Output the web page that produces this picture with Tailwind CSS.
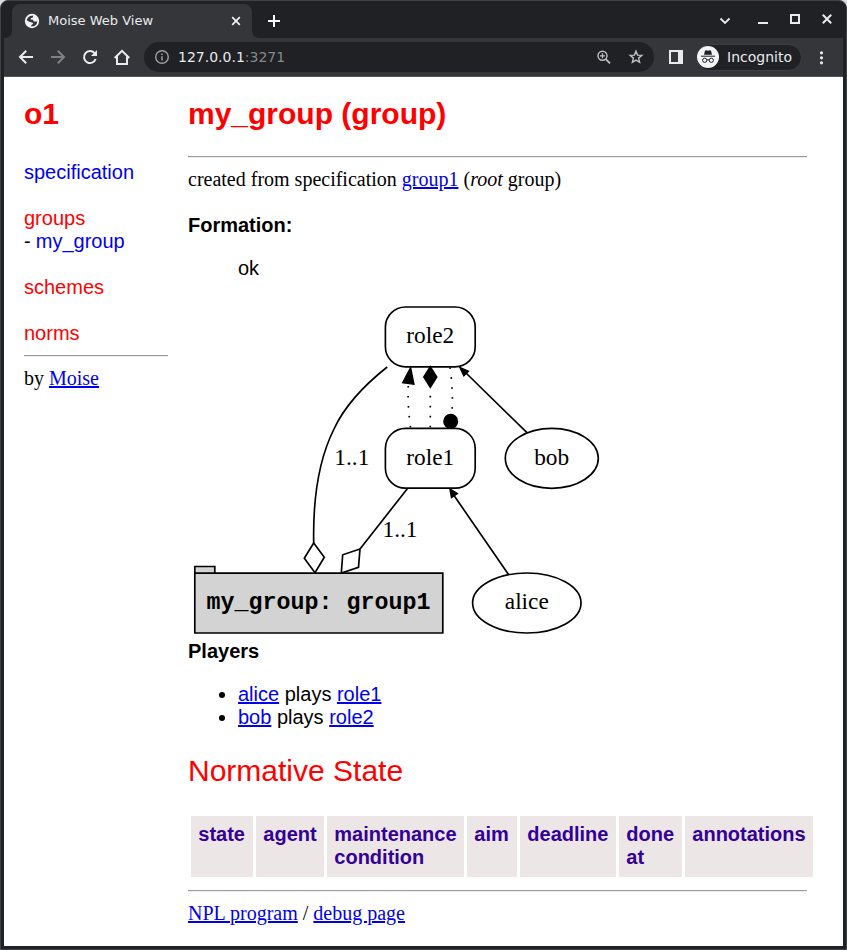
<!DOCTYPE html>
<html lang="en">
<head>
<meta charset="utf-8">
<title>Moise Web View</title>
<script src="https://cdn.jsdelivr.net/npm/@tailwindcss/browser@4"></script>
</head>
<body class="w-[847px] h-[950px] overflow-hidden bg-[#dcdcdc]">
<div class="w-[847px] h-[950px] flex flex-col bg-[#202124] border border-[#3f4245] rounded-t-[8px] overflow-hidden font-['DejaVu_Sans',sans-serif]">
  <!-- Tab strip -->
  <header class="h-[37px] shrink-0 flex items-end text-[#e8eaed]">
    <svg class="w-[11px] h-2 shrink-0" viewBox="0 0 11 8"><path d="M3 8Q11 8 11 0V8Z" fill="#35363a"/></svg>
    <div class="w-[240px] h-[34px] shrink-0 bg-[#35363a] rounded-t-[8px] flex items-center pl-3 pr-[10px]">
      <svg class="w-4 h-4 mr-2" viewBox="0 0 16 16"><circle cx="8" cy="8" r="7.2" fill="#f1f3f4"/><path d="M9.3 2.5 8.8 4.4 6.8 5.2 6.6 6.6 9 6.8 9.8 8.4 13.3 8.6Q13.2 12 10.6 13L7.4 13.4 7.2 12.2 9.2 10.8 8.4 9.4 5.8 9 2.7 7.2Q3.2 4 6 2.9Z" fill="#35363a"/></svg>
      <span class="text-[13px] leading-4 grow whitespace-nowrap">Moise Web View</span>
      <svg class="w-3 h-3" viewBox="0 0 12 12"><path d="M2.2 2.2 9.8 9.8M9.8 2.2 2.2 9.8" stroke="#f1f3f4" stroke-width="1.7"/></svg>
    </div>
    <svg class="w-2 h-2 shrink-0" viewBox="0 0 8 8"><path d="M0 0Q0 8 8 8H0Z" fill="#35363a"/></svg>
    <svg class="w-[30px] h-[34px]" viewBox="0 0 30 34"><path d="M8 17H20M14 11V23" stroke="#fff" stroke-width="2"/></svg>
    <svg class="w-[140px] h-[37px] ml-auto" viewBox="706 1 140 37" fill="none" stroke="#e8eaed" stroke-width="2"><path d="M720.5 18.5 725 23 729.5 18.5" stroke-width="1.8"/><path d="M758 23H768"/><path d="M791 15H799V23H791Z"/><path d="M822.8 14.8 831.2 23.2M831.2 14.8 822.8 23.2"/></svg>
  </header>
  <!-- Toolbar -->
  <nav class="mx-[3px] h-[39px] shrink-0 bg-[#35363a] border-b border-[#525357] flex items-center text-[#e8eaed]">
    <svg class="w-[140px] h-[38px] shrink-0" viewBox="4 38 140 38" fill="none" stroke="#e8eaed" stroke-width="2"><path d="M33 57H20M26.2 50.8 20 57 26.2 63.2"/><path d="M51 57H64M57.8 50.8 64 57 57.8 63.2" stroke="#808185"/><path d="M95.7 59A6 6 0 1 1 94.5 53"/><path d="M97 50V56H91Z" fill="#e8eaed" stroke="none"/><path d="M114.7 58 122 50.8 129.3 58M117 56.5V64H127V56.5" /></svg>
    <div class="w-[510px] h-[30px] shrink-0 rounded-full bg-[#202124] flex items-center pl-[10px] pr-[9px]">
      <svg class="w-4 h-4 mr-2" viewBox="0 0 16 16"><circle cx="8" cy="8" r="6.3" fill="none" stroke="#9aa0a6" stroke-width="1.4"/><path d="M8 7.2V11.5M8 4.5V6" stroke="#9aa0a6" stroke-width="1.5"/></svg>
      <span class="text-[14px] leading-5 grow text-[#e8eaed]">127.0.0.1<span class="text-[#85888c]">:3271</span></span>
      <svg class="w-[50px] h-[30px]" viewBox="595 42 50 30" fill="none" stroke="#bdc1c6"><circle cx="602.5" cy="55.8" r="4.5" stroke-width="1.4"/><path d="M605.8 59.2 610 63.3" stroke-width="1.8"/><path d="M600 55.8H605M602.5 53.3V58.3" stroke-width="1.2"/><path d="M636 51.2 637.6 55.1 641.8 55.4 638.6 58.1 639.6 62.3 636 60.1 632.4 62.3 633.4 58.1 630.2 55.4 634.4 55.1Z" stroke-width="1.4"/></svg>
    </div>
    <svg class="w-[42px] h-[38px] shrink-0" viewBox="654 38 42 38"><path d="M669 50H683V64H669ZM671 52V62H678V52Z" fill="#e8eaed" fill-rule="evenodd"/></svg>
    <div class="w-[106px] h-[27px] shrink-0 rounded-full bg-[#202124] border border-[#3c4043] flex items-center">
      <svg class="w-[22px] h-[22px] mr-[8px]" viewBox="0 0 22 22"><circle cx="11" cy="11" r="11" fill="#f1f3f4"/><path d="M7 8.7 8 4.8Q8.3 4.1 9 4.3L11 4.8 13 4.3Q13.7 4.1 14 4.8L15 8.7Z" fill="#202124"/><path d="M4 10.2H18" stroke="#202124" stroke-width="1"/><g fill="none" stroke="#202124" stroke-width="1"><circle cx="7.7" cy="14.3" r="2.1"/><circle cx="14.3" cy="14.3" r="2.1"/><path d="M9.8 14.1Q11 13.4 12.2 14.1"/></g></svg>
      <span class="text-[14px] leading-5">Incognito</span>
    </div>
    <svg class="w-[37px] h-[38px]" viewBox="802 38 37 38" fill="#e8eaed"><circle cx="821.5" cy="52.8" r="1.6"/><circle cx="821.5" cy="57.8" r="1.6"/><circle cx="821.5" cy="62.8" r="1.6"/></svg>
  </nav>
  <!-- Page -->
  <main class="mx-[3px] mb-[3px] grow bg-white flex pl-5 pt-5 text-[20px] leading-[23px] text-black font-['Liberation_Sans',Arial,sans-serif]">
    <aside class="w-[144px] shrink-0 mr-5">
      <h1 class="text-[30px] leading-[34px] font-bold text-[#ff0000]">o1</h1>
      <p class="mt-[30px] text-[#0000ee]">specification</p>
      <p class="mt-[23px] text-[#ff0000]">groups</p>
      <p>- <span class="text-[#0000ee] -ml-[0.5px]">my_group</span></p>
      <p class="mt-[23px] text-[#ff0000]">schemes</p>
      <p class="mt-[23px] text-[#ff0000]">norms</p>
      <div class="mt-[10px] h-[2px] border-t border-t-[#9a9a9a] border-b border-b-[#eeeeee]"></div>
      <p class="mt-[10px] font-['Liberation_Serif',serif]">by <a class="underline text-[#0000ee]">Moise</a></p>
    </aside>
    <section class="w-[619px] shrink-0">
      <h1 class="text-[30px] leading-[34px] font-bold text-[#ff0000]">my_group (group)</h1>
      <div class="mt-[25px] h-[2px] border-t border-t-[#9a9a9a] border-b border-b-[#eeeeee]"></div>
      <p class="mt-[10px] font-['Liberation_Serif',serif]">created from specification <a class="underline text-[#0000ee]">group1</a> (<i>root</i> group)</p>
      <h2 class="mt-[23px] font-bold">Formation:</h2>
      <p class="mt-5 pl-[50px]">ok</p>
      <svg class="block w-[619px] h-[360px]" viewBox="188 280 619 360" fill="none" stroke="#000" stroke-width="1.67">
        <rect x="385.4" y="307" width="89.8" height="59.8" rx="20"/>
        <rect x="385.4" y="428.4" width="89.8" height="59.8" rx="20"/>
        <ellipse cx="551.8" cy="458.3" rx="46.5" ry="30"/>
        <ellipse cx="526.8" cy="603" rx="54.2" ry="30"/>
        <path d="M194.8 573.1V566.5H214.8V573.1M194.8 573.1H442.8V633H194.8Z" fill="#d3d3d3"/>
        <path d="M387.2 367C367 383 346 403 334 429C317 463 313 507 313.7 543"/>
        <path d="M313.7 543 304.3 558.3 315 572.8 324.3 557.3Z"/>
        <path d="M407.5 488.5 360 549"/>
        <path d="M360 549 342.7 554.8 341.3 573 358.5 567.3Z"/>
        <g stroke-dasharray="1.67 8.33"><path d="M410.5 427.5Q407.5 406 408.3 385"/><path d="M430.3 427.5V388"/><path d="M450 367.3Q453.3 390 452 414"/></g>
        <path d="M527 432.7 466 373M508.5 574.5 454 495.5"/>
        <g fill="#000"><path d="M410.6 367.5 402.6 382.8 414 384.3Z" stroke-width="1.3"/><path d="M430.3 366.8 423.9 377 430.3 387.2 436.7 377Z"/><circle cx="450.7" cy="421.4" r="6.7"/><path d="M459.8 367.3 463.8 375.9 468.4 371.2ZM449.9 489 451.5 497.5 457.4 493.5Z" stroke-width="1.4"/></g>
        <g fill="#000" stroke="none" font-family="Liberation Serif, serif" font-size="23.33" text-anchor="middle">
          <text x="430.2" y="343">role2</text><text x="430.2" y="465">role1</text><text x="551.7" y="465">bob</text><text x="526.8" y="609">alice</text><text x="351.8" y="465">1..1</text><text x="400" y="537">1..1</text>
          <text x="318.5" y="609" font-family="Liberation Mono, monospace" font-weight="bold">my_group: group1</text>
        </g>
      </svg>
      <h2 class="font-bold">Players</h2>
      <ul class="mt-5 pl-[50px] list-disc">
        <li><a class="underline text-[#0000ee]">alice</a> plays <a class="underline text-[#0000ee]">role1</a></li>
        <li><a class="underline text-[#0000ee]">bob</a> plays <a class="underline text-[#0000ee]">role2</a></li>
      </ul>
      <h1 class="mt-[25px] text-[30px] leading-[34px] text-[#ff0000]">Normative State</h1>
      <div class="mt-[28px] ml-[3px] w-[622px] h-[61px] grid grid-cols-[62px_68px_137px_50px_96px_63px_128px] gap-x-[3px] font-bold text-[#330099] *:bg-[#ece6e6] *:pl-[7.3px] *:pt-[7px]">
        <div>state</div><div>agent</div><div>maintenance condition</div><div>aim</div><div>deadline</div><div>done<br>at</div><div>annotations</div>
      </div>
      <div class="mt-[13px] h-[2px] border-t border-t-[#9a9a9a] border-b border-b-[#eeeeee]"></div>
      <p class="mt-[10px] font-['Liberation_Serif',serif]"><a class="underline text-[#0000ee]">NPL program</a> / <a class="underline text-[#0000ee]">debug page</a></p>
    </section>
  </main>
</div>
</body>
</html>
